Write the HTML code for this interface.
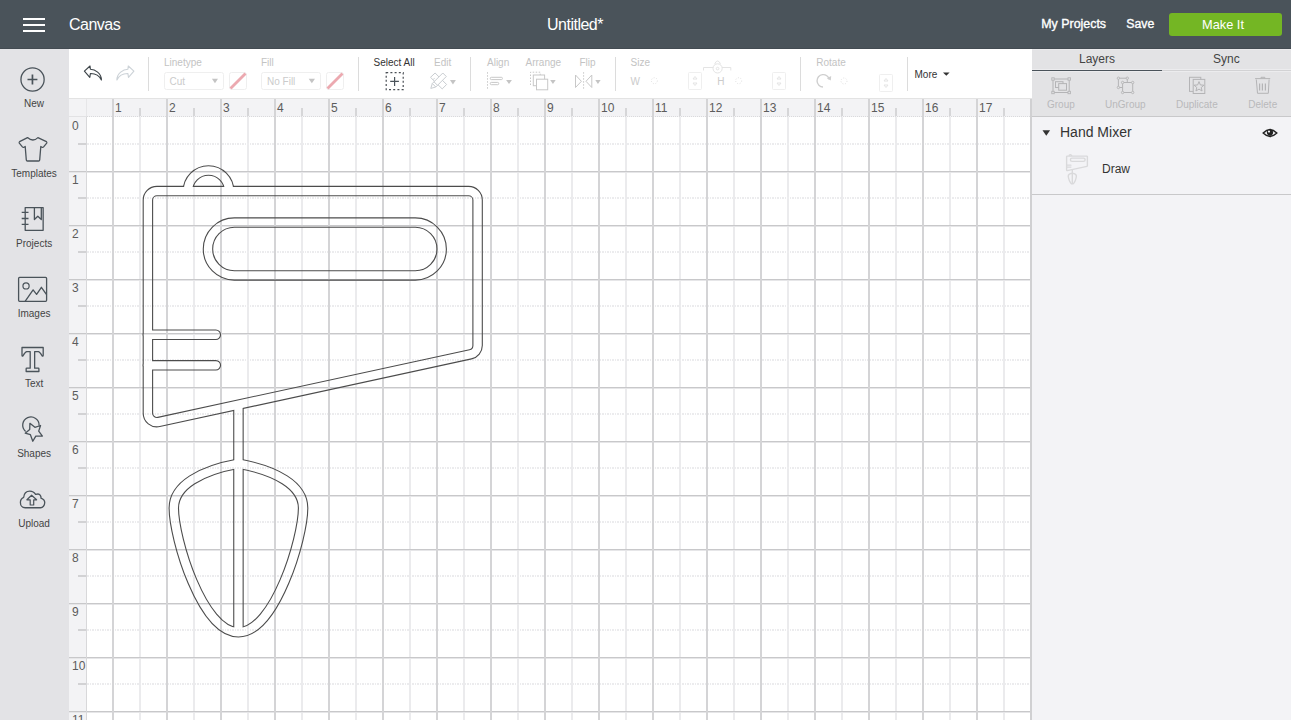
<!DOCTYPE html>
<html><head><meta charset="utf-8">
<style>
html,body{margin:0;padding:0;width:1291px;height:720px;overflow:hidden;background:#fff;}
svg{position:absolute;left:0;top:0;display:block;}
text{font-family:"Liberation Sans",sans-serif;}
</style></head>
<body>
<svg width="1291" height="720" viewBox="0 0 1291 720">
<!-- canvas area -->
<rect x="69" y="48" width="963" height="672" fill="#ffffff"/>
<g shape-rendering="crispEdges">
<rect x="69" y="99" width="962" height="18" fill="#f3f3f5"/>
<rect x="69" y="99" width="17" height="621" fill="#f3f3f5"/>
<rect x="86" y="99" width="1" height="17" fill="#e6e6e8"/>
<rect x="139" y="117" width="2" height="603" fill="#ebebed"/>
<rect x="139" y="108" width="2" height="8" fill="#d6d6d8"/>
<rect x="193" y="117" width="2" height="603" fill="#ebebed"/>
<rect x="193" y="108" width="2" height="8" fill="#d6d6d8"/>
<rect x="247" y="117" width="2" height="603" fill="#ebebed"/>
<rect x="247" y="108" width="2" height="8" fill="#d6d6d8"/>
<rect x="301" y="117" width="2" height="603" fill="#ebebed"/>
<rect x="301" y="108" width="2" height="8" fill="#d6d6d8"/>
<rect x="355" y="117" width="2" height="603" fill="#ebebed"/>
<rect x="355" y="108" width="2" height="8" fill="#d6d6d8"/>
<rect x="409" y="117" width="2" height="603" fill="#ebebed"/>
<rect x="409" y="108" width="2" height="8" fill="#d6d6d8"/>
<rect x="463" y="117" width="2" height="603" fill="#ebebed"/>
<rect x="463" y="108" width="2" height="8" fill="#d6d6d8"/>
<rect x="517" y="117" width="2" height="603" fill="#ebebed"/>
<rect x="517" y="108" width="2" height="8" fill="#d6d6d8"/>
<rect x="571" y="117" width="2" height="603" fill="#ebebed"/>
<rect x="571" y="108" width="2" height="8" fill="#d6d6d8"/>
<rect x="625" y="117" width="2" height="603" fill="#ebebed"/>
<rect x="625" y="108" width="2" height="8" fill="#d6d6d8"/>
<rect x="679" y="117" width="2" height="603" fill="#ebebed"/>
<rect x="679" y="108" width="2" height="8" fill="#d6d6d8"/>
<rect x="733" y="117" width="2" height="603" fill="#ebebed"/>
<rect x="733" y="108" width="2" height="8" fill="#d6d6d8"/>
<rect x="787" y="117" width="2" height="603" fill="#ebebed"/>
<rect x="787" y="108" width="2" height="8" fill="#d6d6d8"/>
<rect x="841" y="117" width="2" height="603" fill="#ebebed"/>
<rect x="841" y="108" width="2" height="8" fill="#d6d6d8"/>
<rect x="895" y="117" width="2" height="603" fill="#ebebed"/>
<rect x="895" y="108" width="2" height="8" fill="#d6d6d8"/>
<rect x="949" y="117" width="2" height="603" fill="#ebebed"/>
<rect x="949" y="108" width="2" height="8" fill="#d6d6d8"/>
<rect x="1003" y="117" width="2" height="603" fill="#ebebed"/>
<rect x="1003" y="108" width="2" height="8" fill="#d6d6d8"/>
<line x1="87" y1="144" x2="1031" y2="144" stroke="#ececee" stroke-width="2" stroke-dasharray="1.5 1"/>
<rect x="78" y="143" width="8" height="2" fill="#d2d2d4"/>
<line x1="87" y1="198" x2="1031" y2="198" stroke="#ececee" stroke-width="2" stroke-dasharray="1.5 1"/>
<rect x="78" y="197" width="8" height="2" fill="#d2d2d4"/>
<line x1="87" y1="252" x2="1031" y2="252" stroke="#ececee" stroke-width="2" stroke-dasharray="1.5 1"/>
<rect x="78" y="251" width="8" height="2" fill="#d2d2d4"/>
<line x1="87" y1="306" x2="1031" y2="306" stroke="#ececee" stroke-width="2" stroke-dasharray="1.5 1"/>
<rect x="78" y="305" width="8" height="2" fill="#d2d2d4"/>
<line x1="87" y1="360" x2="1031" y2="360" stroke="#ececee" stroke-width="2" stroke-dasharray="1.5 1"/>
<rect x="78" y="359" width="8" height="2" fill="#d2d2d4"/>
<line x1="87" y1="414" x2="1031" y2="414" stroke="#ececee" stroke-width="2" stroke-dasharray="1.5 1"/>
<rect x="78" y="413" width="8" height="2" fill="#d2d2d4"/>
<line x1="87" y1="468" x2="1031" y2="468" stroke="#ececee" stroke-width="2" stroke-dasharray="1.5 1"/>
<rect x="78" y="467" width="8" height="2" fill="#d2d2d4"/>
<line x1="87" y1="522" x2="1031" y2="522" stroke="#ececee" stroke-width="2" stroke-dasharray="1.5 1"/>
<rect x="78" y="521" width="8" height="2" fill="#d2d2d4"/>
<line x1="87" y1="576" x2="1031" y2="576" stroke="#ececee" stroke-width="2" stroke-dasharray="1.5 1"/>
<rect x="78" y="575" width="8" height="2" fill="#d2d2d4"/>
<line x1="87" y1="630" x2="1031" y2="630" stroke="#ececee" stroke-width="2" stroke-dasharray="1.5 1"/>
<rect x="78" y="629" width="8" height="2" fill="#d2d2d4"/>
<line x1="87" y1="684" x2="1031" y2="684" stroke="#ececee" stroke-width="2" stroke-dasharray="1.5 1"/>
<rect x="78" y="683" width="8" height="2" fill="#d2d2d4"/>
<rect x="69" y="171" width="962" height="1" fill="#c8c8ca"/>
<rect x="69" y="172" width="962" height="1" fill="#e6e6e8"/>
<rect x="69" y="225" width="962" height="1" fill="#c8c8ca"/>
<rect x="69" y="226" width="962" height="1" fill="#e6e6e8"/>
<rect x="69" y="279" width="962" height="1" fill="#c8c8ca"/>
<rect x="69" y="280" width="962" height="1" fill="#e6e6e8"/>
<rect x="69" y="333" width="962" height="1" fill="#c8c8ca"/>
<rect x="69" y="334" width="962" height="1" fill="#e6e6e8"/>
<rect x="69" y="387" width="962" height="1" fill="#c8c8ca"/>
<rect x="69" y="388" width="962" height="1" fill="#e6e6e8"/>
<rect x="69" y="441" width="962" height="1" fill="#c8c8ca"/>
<rect x="69" y="442" width="962" height="1" fill="#e6e6e8"/>
<rect x="69" y="495" width="962" height="1" fill="#c8c8ca"/>
<rect x="69" y="496" width="962" height="1" fill="#e6e6e8"/>
<rect x="69" y="549" width="962" height="1" fill="#c8c8ca"/>
<rect x="69" y="550" width="962" height="1" fill="#e6e6e8"/>
<rect x="69" y="603" width="962" height="1" fill="#c8c8ca"/>
<rect x="69" y="604" width="962" height="1" fill="#e6e6e8"/>
<rect x="69" y="657" width="962" height="1" fill="#c8c8ca"/>
<rect x="69" y="658" width="962" height="1" fill="#e6e6e8"/>
<rect x="69" y="711" width="962" height="1" fill="#c8c8ca"/>
<rect x="69" y="712" width="962" height="1" fill="#e6e6e8"/>
<rect x="69" y="116" width="18" height="1" fill="#e2e2e4"/>
<line x1="87" y1="116.5" x2="1031" y2="116.5" stroke="#dadadc" stroke-width="1" stroke-dasharray="1 1"/>
<rect x="86" y="117" width="1" height="603" fill="#d8d8da"/>
<rect x="112" y="99" width="2" height="621" fill="#d4d4d6"/>
<rect x="166" y="99" width="2" height="621" fill="#d4d4d6"/>
<rect x="220" y="99" width="2" height="621" fill="#d4d4d6"/>
<rect x="274" y="99" width="2" height="621" fill="#d4d4d6"/>
<rect x="328" y="99" width="2" height="621" fill="#d4d4d6"/>
<rect x="382" y="99" width="2" height="621" fill="#d4d4d6"/>
<rect x="436" y="99" width="2" height="621" fill="#d4d4d6"/>
<rect x="490" y="99" width="2" height="621" fill="#d4d4d6"/>
<rect x="544" y="99" width="2" height="621" fill="#d4d4d6"/>
<rect x="598" y="99" width="2" height="621" fill="#d4d4d6"/>
<rect x="652" y="99" width="2" height="621" fill="#d4d4d6"/>
<rect x="706" y="99" width="2" height="621" fill="#d4d4d6"/>
<rect x="760" y="99" width="2" height="621" fill="#d4d4d6"/>
<rect x="814" y="99" width="2" height="621" fill="#d4d4d6"/>
<rect x="868" y="99" width="2" height="621" fill="#d4d4d6"/>
<rect x="922" y="99" width="2" height="621" fill="#d4d4d6"/>
<rect x="976" y="99" width="2" height="621" fill="#d4d4d6"/>
</g>
<g font-size="12" fill="#5c5c5c">
<text x="115" y="112">1</text>
<text x="169" y="112">2</text>
<text x="223" y="112">3</text>
<text x="277" y="112">4</text>
<text x="331" y="112">5</text>
<text x="385" y="112">6</text>
<text x="439" y="112">7</text>
<text x="493" y="112">8</text>
<text x="547" y="112">9</text>
<text x="601" y="112">10</text>
<text x="655" y="112">11</text>
<text x="709" y="112">12</text>
<text x="763" y="112">13</text>
<text x="817" y="112">14</text>
<text x="871" y="112">15</text>
<text x="925" y="112">16</text>
<text x="979" y="112">17</text>
<text x="72" y="130">0</text>
<text x="72" y="184">1</text>
<text x="72" y="238">2</text>
<text x="72" y="292">3</text>
<text x="72" y="346">4</text>
<text x="72" y="400">5</text>
<text x="72" y="454">6</text>
<text x="72" y="508">7</text>
<text x="72" y="562">8</text>
<text x="72" y="616">9</text>
<text x="72" y="670">10</text>
<text x="72" y="724">11</text>
</g>
<mask id="mk" maskUnits="userSpaceOnUse" x="0" y="0" width="1291" height="720">
<rect x="0" y="0" width="1291" height="720" fill="#fff"/>
<g fill="none" stroke="#000" stroke-width="8.3"><path d="M 156.90,191.10 L 468.60,191.10 A 9,9 0 0 1 477.60,200.10 L 477.60,345.50 A 9,9 0 0 1 470.51,354.30 L 158.81,421.94 A 9,9 0 0 1 147.90,413.14 L 147.90,200.10 A 9,9 0 0 1 156.90,191.10 Z"/><path d="M 187.9,191.1 A 20.6,20.6 0 0 1 229.1,191.1"/><path d="M 234.35,222.6 H 415.3 A 26.4,26.4 0 0 1 415.3,275.4 H 234.35 A 26.4,26.4 0 0 1 234.35,222.6 Z"/><path d="M 238.45,463.68 C 201.39,470.36 173.8,485.31 173.8,508.03 C 173.8,538.19 201.99,632.29 238.45,632.29 C 274.91,632.29 303.10,538.19 303.10,508.03 C 303.10,485.31 275.51,470.36 238.45,463.68 Z"/><path d="M 147.9,334.75 H 215.85 M 147.9,365.3 H 215.85" stroke-linecap="round"/><path d="M 238.45,404.66 V 632.29"/></g></mask>
<g mask="url(#mk)" fill="none" stroke="#4c4c4c" stroke-width="10.5"><path d="M 156.90,191.10 L 468.60,191.10 A 9,9 0 0 1 477.60,200.10 L 477.60,345.50 A 9,9 0 0 1 470.51,354.30 L 158.81,421.94 A 9,9 0 0 1 147.90,413.14 L 147.90,200.10 A 9,9 0 0 1 156.90,191.10 Z"/><path d="M 187.9,191.1 A 20.6,20.6 0 0 1 229.1,191.1"/><path d="M 234.35,222.6 H 415.3 A 26.4,26.4 0 0 1 415.3,275.4 H 234.35 A 26.4,26.4 0 0 1 234.35,222.6 Z"/><path d="M 238.45,463.68 C 201.39,470.36 173.8,485.31 173.8,508.03 C 173.8,538.19 201.99,632.29 238.45,632.29 C 274.91,632.29 303.10,538.19 303.10,508.03 C 303.10,485.31 275.51,470.36 238.45,463.68 Z"/><path d="M 147.9,334.75 H 215.85 M 147.9,365.3 H 215.85" stroke-linecap="round"/><path d="M 238.45,404.66 V 632.29"/></g>

<!-- toolbar -->
<rect x="69" y="48" width="963" height="50" fill="#ffffff"/>
<rect x="69" y="98" width="963" height="1" fill="#e3e3e3"/>


<!-- header -->
<rect x="0" y="0" width="1291" height="49" fill="#4a535a"/>
<rect x="0" y="48" width="1291" height="1" fill="#434b52"/>
<g fill="#fff">
<rect x="23" y="18" width="22" height="2"/>
<rect x="23" y="24" width="22" height="2"/>
<rect x="23" y="30" width="22" height="2"/>
</g>
<text x="69" y="30" font-size="16" letter-spacing="-0.5" fill="#fff">Canvas</text>
<text x="547" y="30" font-size="16" letter-spacing="-0.5" fill="#fff">Untitled*</text>
<text x="1041.3" y="27.8" font-size="12.4" fill="#fff" stroke="#fff" stroke-width="0.35">My Projects</text>
<text x="1126.3" y="27.8" font-size="12.3" fill="#fff" stroke="#fff" stroke-width="0.35">Save</text>
<rect x="1169" y="13" width="113" height="23" rx="3" fill="#74b624"/>
<text x="1202" y="28.8" font-size="12.8" fill="#fff">Make It</text>

<!-- sidebar -->
<rect x="0" y="49" width="69" height="671" fill="#e3e3e6"/>
<g font-size="10" fill="#444" text-anchor="middle">
<text x="34.1" y="106.8">New</text>
<text x="34.1" y="177.4">Templates</text>
<text x="34.1" y="246.8">Projects</text>
<text x="34.1" y="317.4">Images</text>
<text x="34.1" y="386.8">Text</text>
<text x="34.1" y="457.4">Shapes</text>
<text x="34.1" y="526.8">Upload</text>
</g>

<!-- right panel -->
<rect x="1032" y="49" width="259" height="671" fill="#f3f3f6"/>
<rect x="1032" y="49" width="259" height="67" fill="#e3e3e5"/>
<rect x="1032" y="49" width="259" height="1" fill="#e9e9eb"/>
<rect x="1030" y="99" width="2" height="621" fill="#d0d0d2"/>
<rect x="1032" y="69" width="259" height="1" fill="#ececee"/>
<rect x="1032" y="70" width="259" height="1" fill="#d2d2d4"/>
<rect x="1032" y="71" width="259" height="1" fill="#ececee"/>
<rect x="1032" y="70" width="130" height="1" fill="#4a535a"/>
<rect x="1032" y="116" width="259" height="1" fill="#c8c8ca"/>
<rect x="1032" y="194" width="259" height="1" fill="#c8c8ca"/>
<g font-size="12" fill="#444">
<text x="1079" y="63.1">Layers</text>
<text x="1213" y="63.1">Sync</text>
</g>
<g font-size="10" fill="#b9b9bb">
<text x="1047" y="107.8">Group</text>
<text x="1105" y="107.8">UnGroup</text>
<text x="1176" y="107.8">Duplicate</text>
<text x="1248.3" y="107.8">Delete</text>
</g>
<path d="M1042.5,130.2 L1050.1,130.2 L1046.3,135.8 Z" fill="#333"/>
<text x="1060" y="137.2" font-size="14" fill="#333">Hand Mixer</text>
<text x="1102" y="172.8" font-size="12" fill="#333">Draw</text>

<!-- sidebar icons -->
<g fill="none" stroke="#4a535a" stroke-width="1.3" stroke-linejoin="round">
<circle cx="32.55" cy="79.5" r="11.6"/>
<path d="M27.5,79.5 H37.4 M32.45,74.6 V84.6" stroke-width="1.7"/>
<path d="M27.5,137.6 Q33,142.4 37.9,137.6 L46.4,141.6 Q47.1,142.3 46.7,143.1 L43.6,146.9 Q42.9,147.7 42,147.2 L40.8,146.5 L39.7,160 Q39.6,161 38.6,161 L27.4,161 Q26.4,161 26.3,160 L25.2,146.5 L24,147.2 Q23.1,147.7 22.4,146.9 L19.3,143.1 Q18.9,142.3 19.6,141.6 Z"/>
<rect x="25.2" y="207.6" width="17.95" height="22.7"/>
<path d="M21.7,212.4 H28.5 M21.7,218.5 H28.5 M21.7,224.4 H28.5"/>
<path d="M34.4,207.6 V219.5 L37.8,216.2 L41.3,219.5 V207.6"/>
<rect x="18.6" y="277.4" width="28" height="23.9" rx="1"/>
<circle cx="26.04" cy="285.9" r="3.1" stroke-width="1.2"/>
<path d="M25.1,301.3 L33.1,289.9 L36.6,294.4 L41.4,287.3 L46.6,294.7"/>
<path d="M22,347.5 H43.2 V355 Q43.2,356.6 42.2,356 Q40,352 38.5,351.6 H34.65 V368.2 H38.3 Q38.9,368.2 38.9,368.8 V371.5 H26.15 V368.8 Q26.15,368.2 26.8,368.2 H30.2 V351.6 H26.6 Q25,352 22.9,356 Q22,356.6 22,355 Z"/>
<path d="M29.9,423.3 L34.9,427.3 L40.55,425.5 L38.7,431.1 L42.4,436.1 L35.8,436.1 L32.8,441.3 L30.4,434.7 L25.2,433.2 L29.7,429.5 Z"/>
<path d="M25.6,431.4 A8.2,8.2 0 1 1 39.1,425.6"/>
<path d="M25.2,507.75 C22,507.75 20.4,505 20.4,502.5 C20.4,500 22,498 23.7,497.3 C24,493.5 26.5,491.1 29.8,491.1 C32.5,491.1 34.5,492.6 35.6,494.4 C36.3,494.2 37,494 38,494 C40,494 41.2,496 41,498.2 C43,499 44.75,500.5 44.75,502.6 C44.75,505.5 42.7,507.75 40.6,507.75 Z"/>
<path d="M31.6,495.25 L36.6,499.8 H33.7 V505 H30.2 V499.8 H26.9 Z" stroke-width="1.2"/>
</g>

<!-- toolbar -->
<g fill="none" stroke-linejoin="round" stroke-width="1.3">
<path d="M84.4,71.2 L90,66 L90.4,69.3 C95,69.5 101.4,73 101.4,80 C99.5,76 95,73.4 90.4,73.5 L89.8,77.4 Z" stroke="#3d4449" stroke-width="1.15"/>
<path d="M133.9,71.2 L128.3,66 L127.9,69.3 C123.3,69.5 116.9,73 116.9,80 C118.8,76 123.3,73.4 127.9,73.5 L128.5,77.4 Z" stroke="#cdd3d8" stroke-width="1.15"/>
</g>
<g fill="#dcdcdc">
<rect x="148" y="57" width="1" height="34"/>
<rect x="358" y="57" width="1" height="34"/>
<rect x="470" y="57" width="1" height="34"/>
<rect x="615" y="57" width="1" height="34"/>
<rect x="800" y="57" width="1" height="34"/>
<rect x="907" y="57" width="1" height="34"/>
</g>
<g font-size="10" fill="#c3c3c3">
<text x="164" y="66">Linetype</text>
<text x="261" y="66">Fill</text>
<text x="434" y="65.6">Edit</text>
<text x="487" y="66">Align</text>
<text x="525.5" y="66">Arrange</text>
<text x="579.5" y="66">Flip</text>
<text x="630.5" y="66">Size</text>
<text x="816.3" y="66">Rotate</text>
</g>
<text x="373.5" y="65.6" font-size="10" fill="#333">Select All</text>
<text x="914.5" y="77.5" font-size="10" fill="#333">More</text>
<path d="M943,72.4 H949.6 L946.3,75.8 Z" fill="#333"/>
<!-- dropdowns -->
<g fill="#fff" stroke="#efefef" stroke-width="1">
<rect x="164.5" y="72.5" width="59" height="17" rx="2"/>
<rect x="229.5" y="72.5" width="17" height="17" rx="2"/>
<rect x="261.5" y="72.5" width="59" height="17" rx="2"/>
<rect x="326.5" y="72.5" width="17" height="17" rx="2"/>
<rect x="688.5" y="72.5" width="13" height="17" rx="1"/>
<rect x="772.5" y="72.5" width="13" height="17" rx="1"/>
<rect x="879.5" y="74.5" width="13" height="17" rx="1"/>
</g>
<g font-size="10" fill="#cbcbcb">
<text x="169.5" y="84.9">Cut</text>
<text x="267" y="84.9">No Fill</text>
<text x="630.5" y="84.9">W</text>
<text x="717.3" y="84.9">H</text>
</g>
<g fill="#c4c4c4">
<path d="M211.9,78.7 H218 L214.95,83.3 Z"/>
<path d="M308.7,78.7 H315 L311.85,83.3 Z"/>
<path d="M450,80.1 H455.9 L452.95,84.4 Z"/>
<path d="M506.1,80.1 H511.9 L509,83.9 Z"/>
<path d="M550.2,80.1 H555.7 L552.95,83.9 Z"/>
<path d="M595.3,80.1 H600.6 L597.95,83.9 Z"/>
</g>
<g stroke="#eca9b0" stroke-width="2.8" stroke-linecap="butt">
<path d="M230.5,88.5 L245.5,73.5"/>
<path d="M327.5,88.5 L342.5,73.5"/>
</g>
<!-- select all -->
<rect x="386.2" y="72.65" width="17" height="17" fill="none" stroke="#4a4f55" stroke-width="1.2" stroke-dasharray="2 2.2"/>
<path d="M390.2,81.3 H398.9 M394.6,77 V86" stroke="#4a535a" stroke-width="1.2"/>
<!-- edit icon -->
<g fill="none" stroke="#c9cdd1" stroke-width="1">
<path d="M430.5,77.3 L435.1,73 L446.6,84.5 L442.2,88.9 Z"/>
<path d="M433,79.7 L434.5,78.2 M435.5,82.2 L437,80.7 M438,84.7 L439.5,83.2"/>
<path d="M430.8,88.4 L432.3,83.5 L442.8,73 L446.3,76.5 L435.8,87 Z" fill="#fff"/><path d="M432.3,83.5 L435.8,87 M434,81.8 L437.5,85.3"/>
</g>
<!-- align -->
<g fill="none" stroke="#c8c8c8" stroke-width="1">
<path d="M487.5,72.2 V89.4" stroke-dasharray="1.5 1.5"/>
<rect x="490.3" y="77.3" width="12.1" height="2.3" rx="1"/>
<rect x="490.3" y="82.4" width="8.4" height="2.3" rx="1"/>
<path d="M530.5,85 V72.2 H540.2 V75" stroke-dasharray="1.5 1.5"/>
<rect x="533.3" y="75" width="11.3" height="10.7" fill="#fff"/>
<rect x="536.5" y="79.2" width="11.2" height="10.6" fill="#fff"/>
<path d="M575.5,75 V87.5 L581.4,81.3 Z"/>
<path d="M591.8,75 V87.5 L586,81.3 Z"/>
<path d="M583.6,72.2 V90" stroke-dasharray="1.5 1.5"/>
</g>
<!-- lock / steppers / rotate (faint) -->
<g fill="none" stroke="#dcdcdc" stroke-width="0.9" stroke-dasharray="1 1.6">
<circle cx="654.4" cy="80.7" r="3"/>
<circle cx="738.7" cy="80.7" r="3"/>
<circle cx="844" cy="81" r="3"/>
</g>
<g fill="none" stroke="#e4e4e4" stroke-width="1">
<path d="M703.5,70.5 V67.5 H730.8 V70.5"/>
<circle cx="717.6" cy="68.4" r="4.6" fill="#fff"/>
<path d="M715,64.3 V63.2 Q717.6,58.8 720.2,63.2 V64.3"/>
<circle cx="717.6" cy="68.6" r="1.3"/>
<path d="M693,79 L695,76.5 L697,79 Z M693,83 L695,85.5 L697,83 Z"/>
<path d="M777,79 L779,76.5 L781,79 Z M777,83 L779,85.5 L781,83 Z"/>
<path d="M884,81 L886,78.5 L888,81 Z M884,85 L886,87.5 L888,85 Z"/>
</g>
<path d="M829.3,79.5 A6.2,6.2 0 1 0 823,87" fill="none" stroke="#cfcfcf" stroke-width="1.4"/>
<path d="M826.8,78.2 L830.8,80.4 L831.2,76 Z" fill="#cfcfcf"/>

<!-- right panel icons -->
<g fill="none" stroke="#b4b4b6" stroke-width="1">
<rect x="1053" y="79" width="16.2" height="13.5"/>
<rect x="1055.5" y="81.7" width="7.5" height="5.8"/>
<rect x="1058.7" y="83.6" width="7.8" height="6.6" fill="#e3e3e5"/>
<rect x="1118.4" y="78.2" width="8.9" height="9.3"/>
<rect x="1122.6" y="82.5" width="10.1" height="10" fill="#e3e3e5"/>
<rect x="1189.5" y="77.3" width="11.3" height="14.1"/>
<rect x="1193.2" y="79.4" width="11.6" height="14.1" fill="#e3e3e5"/>
<path d="M1199.00,81.60 L1200.35,84.94 L1203.95,85.19 L1201.19,87.51 L1202.06,91.01 L1199.00,89.10 L1195.94,91.01 L1196.81,87.51 L1194.05,85.19 L1197.65,84.94 Z"/>
<path d="M1255.1,78.6 H1270.2 M1261,78.3 V77.3 H1264.8 V78.3"/>
<path d="M1256.3,79.5 L1257.5,93.3 H1268.3 L1269.1,79.5"/>
<path d="M1259.6,83.6 V90.6 M1262.4,83.6 V90.6 M1265.4,83.6 V90.6" stroke-width="1.2"/>
</g>
<g fill="#e3e3e5" stroke="#b4b4b6" stroke-width="0.9">
<rect x="1051.8" y="77.8" width="2.4" height="2.4"/>
<rect x="1068" y="77.8" width="2.4" height="2.4"/>
<rect x="1051.8" y="91.3" width="2.4" height="2.4"/>
<rect x="1068" y="91.3" width="2.4" height="2.4"/>
<circle cx="1118.4" cy="78.2" r="1.2"/>
<circle cx="1127.3" cy="78.2" r="1.2"/>
<circle cx="1118.4" cy="87.5" r="1.2"/>
<circle cx="1122.6" cy="82.5" r="1.2"/>
<circle cx="1132.7" cy="82.5" r="1.2"/>
<circle cx="1122.6" cy="92.5" r="1.2"/>
<circle cx="1132.7" cy="92.5" r="1.2"/>
</g>
<g transform="translate(1066.3,154.5) scale(0.063) translate(-143,-165.8)" fill="none" stroke="#d9d9db" stroke-width="22"><path d="M 156.90,191.10 L 468.60,191.10 A 9,9 0 0 1 477.60,200.10 L 477.60,345.50 A 9,9 0 0 1 470.51,354.30 L 158.81,421.94 A 9,9 0 0 1 147.90,413.14 L 147.90,200.10 A 9,9 0 0 1 156.90,191.10 Z"/><path d="M 187.9,191.1 A 20.6,20.6 0 0 1 229.1,191.1"/><path d="M 234.35,222.6 H 415.3 A 26.4,26.4 0 0 1 415.3,275.4 H 234.35 A 26.4,26.4 0 0 1 234.35,222.6 Z"/><path d="M 238.45,463.68 C 201.39,470.36 173.8,485.31 173.8,508.03 C 173.8,538.19 201.99,632.29 238.45,632.29 C 274.91,632.29 303.10,538.19 303.10,508.03 C 303.10,485.31 275.51,470.36 238.45,463.68 Z"/><path d="M 147.9,334.75 H 215.85 M 147.9,365.3 H 215.85" stroke-linecap="round"/><path d="M 238.45,404.66 V 632.29"/></g>
<!-- eye -->
<path d="M1263.2,133 Q1270,126.2 1276.8,133 Q1270,139.8 1263.2,133 Z" fill="none" stroke="#222" stroke-width="1.5"/>
<circle cx="1270" cy="132.6" r="3.1" fill="#222"/>
<circle cx="1269" cy="131.6" r="1.1" fill="#f3f3f6"/>

</svg>
</body></html>
